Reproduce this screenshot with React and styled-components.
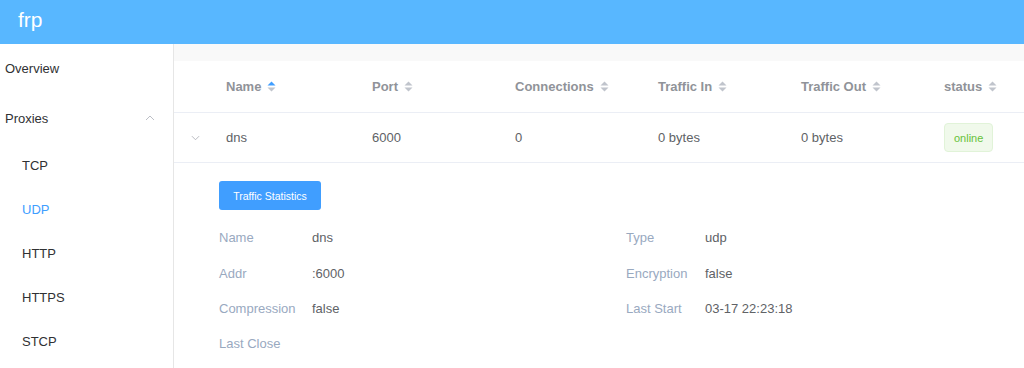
import React from 'react'
import styled, { createGlobalStyle } from 'styled-components'

const GlobalStyle = createGlobalStyle`
  html, body {
    margin: 0;
    padding: 0;
    background: #fff;
    font-family: "Liberation Sans", Helvetica, Arial, sans-serif;
  }
  * { box-sizing: border-box; }
`

const Page = styled.div`
  width: 1024px;
  height: 368px;
  overflow: hidden;
  display: flex;
  flex-direction: column;
`

const Header = styled.header`
  height: 44px;
  flex: none;
  background: #58b7ff;
  color: #fff;
  font-size: 21px;
  display: flex;
  align-items: center;
  padding: 0 0 4px 18px;
`

const Body = styled.div`
  flex: 1;
  display: flex;
  min-height: 0;
`

const Sidebar = styled.nav`
  width: 174px;
  flex: none;
  border-right: 1px solid #e6e6e6;
  display: flex;
  flex-direction: column;
`

const MenuItem = styled.div`
  height: ${p => (p.$sub ? 44 : 49.5)}px;
  display: flex;
  align-items: center;
  justify-content: space-between;
  padding: ${p => (p.$sub ? '0 0 0 22px' : '0 18px 0 5px')};
  font-size: 13px;
  color: ${p => (p.$active ? '#409eff' : '#303133')};
`

const Main = styled.main`
  flex: 1;
  min-width: 0;
  overflow: hidden;
  display: flex;
  flex-direction: column;
`

const Strip = styled.div`
  height: 17px;
  flex: none;
  background: #f9f9f9;
`

const cols = '52px 146px 143px 143px 143px 143px 1fr'

const Row = styled.div`
  display: grid;
  grid-template-columns: ${cols};
  align-items: center;
  height: ${p => p.$h}px;
  border-bottom: 1px solid #ebeef5;
`

const HeadCell = styled.div`
  display: flex;
  align-items: center;
  gap: 6px;
  font-size: 13px;
  font-weight: bold;
  color: #909399;
  white-space: nowrap;
`

const Cell = styled.div`
  font-size: 13px;
  color: #606266;
  white-space: nowrap;
`

const ExpandCell = styled.div`
  display: flex;
  justify-content: center;
  padding-right: 10px;
`

const Tag = styled.span`
  display: inline-flex;
  align-items: center;
  height: 29px;
  padding: 0 9px;
  font-size: 11px;
  color: #67c23a;
  background: #f0f9eb;
  border: 1px solid #e1f3d8;
  border-radius: 4px;
`

const Expanded = styled.div`
  padding: 18px 0 0 45px;
`

const Button = styled.button`
  width: 102px;
  height: 29px;
  border: none;
  border-radius: 3px;
  background: #409eff;
  color: #fff;
  font-family: inherit;
  font-size: 10.5px;
  padding: 0;
`

const Details = styled.div`
  margin-top: 10px;
  display: grid;
  grid-template-columns: 407px 1fr;
  grid-auto-rows: 35.4px;
`

const Field = styled.div`
  display: flex;
  align-items: center;
  font-size: 13px;
`

const Label = styled.span`
  width: ${p => p.$w}px;
  flex: none;
  color: #99a9bf;
`

const Value = styled.span`
  color: #606266;
`

const Caret = ({ active }) => (
  <svg width="9" height="11" viewBox="0 0 9 11">
    <path d="M4.5 0.5 L8.5 4.5 H0.5 Z" fill={active ? '#409eff' : '#c0c4cc'} />
    <path d="M4.5 10.5 L8.5 6.5 H0.5 Z" fill="#c0c4cc" />
  </svg>
)

const Chevron = ({ up, color = '#909399', size = 9 }) => (
  <svg width={size} height={size} viewBox="0 0 10 10">
    <path
      d={up ? 'M1 7 L5 3 L9 7' : 'M1 3.5 L5 7.5 L9 3.5'}
      fill="none"
      stroke={color}
      strokeWidth="0.9"
    />
  </svg>
)

const headers = ['Name', 'Port', 'Connections', 'Traffic In', 'Traffic Out', 'status']

const left = [
  ['Name', 'dns'],
  ['Addr', ':6000'],
  ['Compression', 'false'],
  ['Last Close', ''],
]
const right = [
  ['Type', 'udp'],
  ['Encryption', 'false'],
  ['Last Start', '03-17 22:23:18'],
]

export default function App() {
  const detailCells = []
  for (let i = 0; i < 4; i++) {
    detailCells.push(
      <Field key={'l' + i}>
        <Label $w={93}>{left[i][0]}</Label>
        <Value>{left[i][1]}</Value>
      </Field>
    )
    detailCells.push(
      <Field key={'r' + i}>
        {right[i] && <Label $w={79}>{right[i][0]}</Label>}
        {right[i] && <Value>{right[i][1]}</Value>}
      </Field>
    )
  }

  return (
    <>
      <GlobalStyle />
      <Page>
        <Header>frp</Header>
        <Body>
          <Sidebar>
            <MenuItem>Overview</MenuItem>
            <MenuItem>
              Proxies
              <Chevron up color="#b4b8bf" size={10} />
            </MenuItem>
            <MenuItem $sub>TCP</MenuItem>
            <MenuItem $sub $active>UDP</MenuItem>
            <MenuItem $sub>HTTP</MenuItem>
            <MenuItem $sub>HTTPS</MenuItem>
            <MenuItem $sub>STCP</MenuItem>
          </Sidebar>
          <Main>
            <Strip />
            <Row $h={52}>
              <div />
              {headers.map((h, i) => (
                <HeadCell key={h}>
                  {h}
                  <Caret active={i === 0} />
                </HeadCell>
              ))}
            </Row>
            <Row $h={50}>
              <ExpandCell>
                <Chevron color="#a8abb2" size={9} />
              </ExpandCell>
              <Cell>dns</Cell>
              <Cell>6000</Cell>
              <Cell>0</Cell>
              <Cell>0 bytes</Cell>
              <Cell>0 bytes</Cell>
              <div>
                <Tag>online</Tag>
              </div>
            </Row>
            <Expanded>
              <Button>Traffic Statistics</Button>
              <Details>{detailCells}</Details>
            </Expanded>
          </Main>
        </Body>
      </Page>
    </>
  )
}
